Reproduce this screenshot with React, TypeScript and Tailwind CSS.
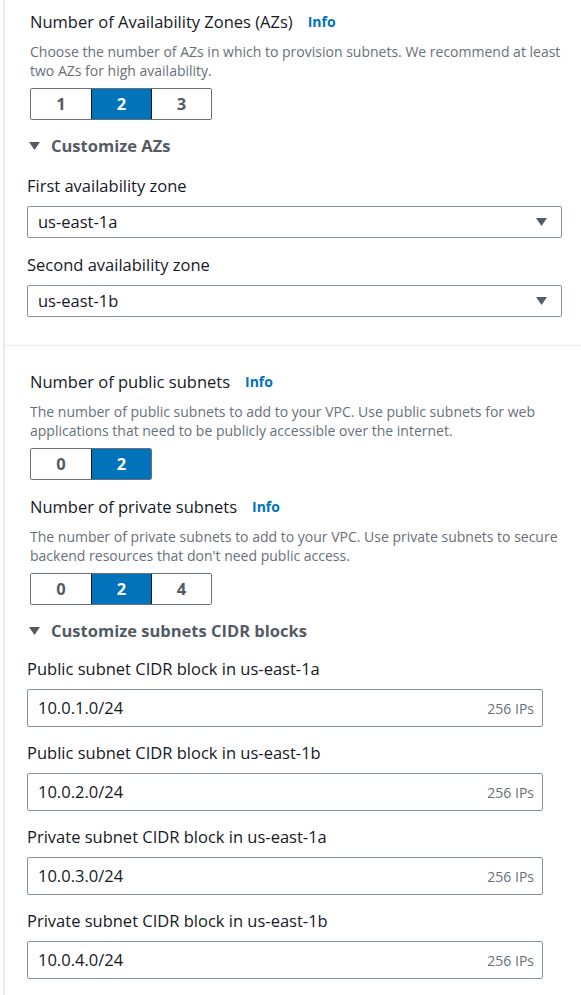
import React from "react";

// ─── Small pieces ─────────────────────────────────────────────────────────────
function Info() {
  return <span className="text-[14px] font-bold text-[#0073bb] leading-[22px]">Info</span>;
}

function Caret() {
  return (
    <svg width="11" height="8" viewBox="0 0 11 8">
      <path d="M0 0H11L5.5 8Z" fill="#545b64" />
    </svg>
  );
}

function Segments({ options, selected }: { options: string[]; selected: string }) {
  return (
    <div className="flex w-fit rounded-[2px] border border-[#687078] overflow-hidden">
      {options.map((o, i) => {
        const on = o === selected;
        return (
          <div
            key={o}
            className={
              "w-[60px] h-[30px] flex items-center justify-center text-[16.5px] font-bold " +
              (i > 0 ? "border-l border-[#16191f] " : "") +
              (on ? "bg-[#0073bb] text-white" : "bg-white text-[#545b64]")
            }
          >
            {o}
          </div>
        );
      })}
    </div>
  );
}

function Heading({ title, lines }: { title: string; lines: string[] }) {
  return (
    <div className="pl-[25px]">
      <div className="flex items-center gap-[15px] h-[22px]">
        <span className="text-[16.5px] leading-[22px] text-[#16191f]">{title}</span>
        <Info />
      </div>
      <p className="mt-[9px] text-[14px] leading-[19px] text-[#687078]">
        {lines.map((l) => (
          <span key={l} className="block whitespace-nowrap">
            {l}
          </span>
        ))}
      </p>
    </div>
  );
}

function Expander({ label }: { label: string }) {
  return (
    <div className="flex items-center h-[22px] pl-[24px] gap-[11px]">
      <Caret />
      <span className="text-[16.5px] font-bold text-[#545b64] leading-[22px]">{label}</span>
    </div>
  );
}

function SelectField({ label, value }: { label: string; value: string }) {
  return (
    <div className="pl-[22px] pr-[19px]">
      <div className="text-[16.5px] leading-[22px] text-[#16191f]">{label}</div>
      <div className="mt-[9px] h-[32px] flex items-center justify-between rounded-[2px] border border-[#879596] pl-[10px] pr-[14px]">
        <span className="text-[16.5px] text-[#16191f]">{value}</span>
        <Caret />
      </div>
    </div>
  );
}

function CidrField({ label, value }: { label: string; value: string }) {
  return (
    <div className="pl-[22px] pr-[38px]">
      <div className="text-[16.5px] leading-[22px] text-[#16191f]">{label}</div>
      <div className="mt-[9px] h-[38px] flex items-center justify-between rounded-[2px] border border-[#879596] pl-[10px] pr-[8px]">
        <span className="text-[16.5px] text-[#16191f]">{value}</span>
        <span className="text-[14px] text-[#687078]">256 IPs</span>
      </div>
    </div>
  );
}

// ─── Page ─────────────────────────────────────────────────────────────────────
export default function App() {
  return (
    <div className="w-[581px] h-[995px] bg-white overflow-hidden pl-[3px] font-['Open_Sans',sans-serif]">
      <div className="h-full border-l-2 border-[#e9ebed]">
        {/* ── Availability zones ── */}
        <div className="pt-[11px] pb-[28px] border-b border-[#eaeded]">
          <Heading
            title="Number of Availability Zones (AZs)"
            lines={[
              "Choose the number of AZs in which to provision subnets. We recommend at least",
              "two AZs for high availability.",
            ]}
          />
          <div className="pl-[25px] mt-[8px]">
            <Segments options={["1", "2", "3"]} selected="2" />
          </div>
          <div className="mt-[15px]">
            <Expander label="Customize AZs" />
          </div>
          <div className="mt-[18px] flex flex-col gap-[16px]">
            <SelectField label="First availability zone" value="us-east-1a" />
            <SelectField label="Second availability zone" value="us-east-1b" />
          </div>
        </div>

        {/* ── Subnets ── */}
        <div className="pt-[25px]">
          <Heading
            title="Number of public subnets"
            lines={[
              "The number of public subnets to add to your VPC. Use public subnets for web",
              "applications that need to be publicly accessible over the internet.",
            ]}
          />
          <div className="pl-[25px] mt-[8px]">
            <Segments options={["0", "2"]} selected="2" />
          </div>
          <div className="mt-[16px]">
            <Heading
              title="Number of private subnets"
              lines={[
                "The number of private subnets to add to your VPC. Use private subnets to secure",
                "backend resources that don't need public access.",
              ]}
            />
          </div>
          <div className="pl-[25px] mt-[8px]">
            <Segments options={["0", "2", "4"]} selected="2" />
          </div>
          <div className="mt-[15px]">
            <Expander label="Customize subnets CIDR blocks" />
          </div>
          <div className="mt-[16px] flex flex-col gap-[15px]">
            <CidrField label="Public subnet CIDR block in us-east-1a" value="10.0.1.0/24" />
            <CidrField label="Public subnet CIDR block in us-east-1b" value="10.0.2.0/24" />
            <CidrField label="Private subnet CIDR block in us-east-1a" value="10.0.3.0/24" />
            <CidrField label="Private subnet CIDR block in us-east-1b" value="10.0.4.0/24" />
          </div>
        </div>
      </div>
    </div>
  );
}
